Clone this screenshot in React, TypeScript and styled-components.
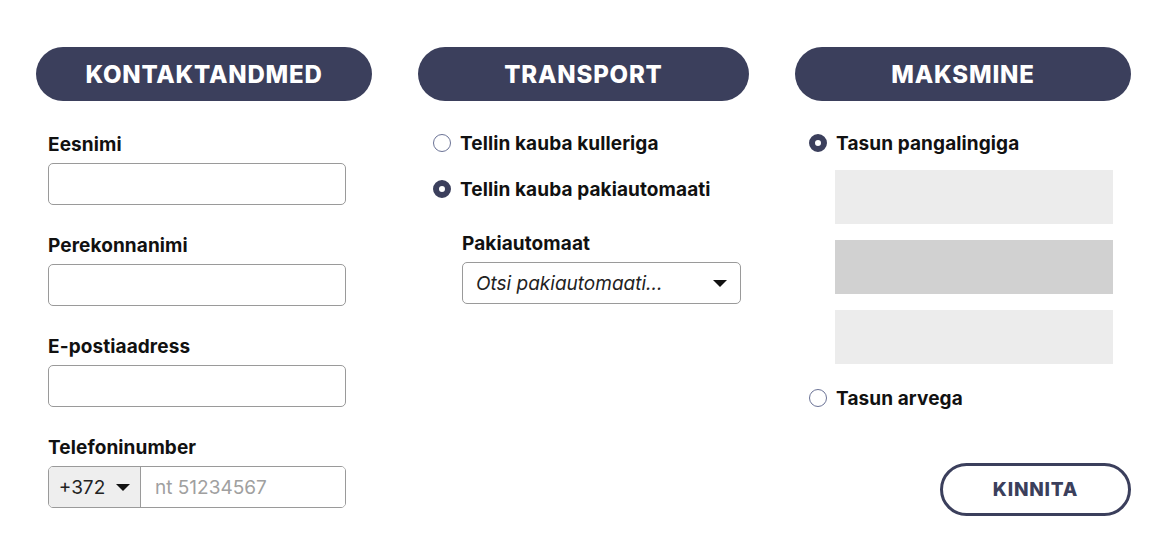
import styled, { createGlobalStyle } from "styled-components";

const GlobalStyle = createGlobalStyle`
  body {
    margin: 0;
    background: #ffffff;
    font-family: "Inter", "Liberation Sans", sans-serif;
    color: #111111;
  }
  * { box-sizing: border-box; }
`;

const NAVY = "#3b3f5c";

const Page = styled.div`
  display: grid;
  grid-template-columns: 336px 331px 336px;
  column-gap: 46px;
  padding: 47px 39px 0 36px;
  height: 555px;
`;

const Column = styled.section`
  display: flex;
  flex-direction: column;
`;

const Header = styled.h2`
  margin: 0 0 31px;
  height: 54px;
  border-radius: 27px;
  background: ${NAVY};
  color: #ffffff;
  display: flex;
  align-items: center;
  justify-content: center;
  font-size: 24px;
  font-weight: 800;
  letter-spacing: 0.8px;
  text-transform: uppercase;
`;

const Body = styled.div<{ $inset: number }>`
  display: flex;
  flex-direction: column;
  padding-left: ${(p) => p.$inset}px;
`;

const Field = styled.div`
  display: flex;
  flex-direction: column;
  margin-bottom: 28px;
`;

const Label = styled.label`
  font-size: 19px;
  line-height: 22px;
  font-weight: 700;
  letter-spacing: 0.1px;
  margin: 2px 0 7px;
`;

const TextInput = styled.input`
  width: 298px;
  height: 42px;
  border: 1.5px solid #9a9a9a;
  border-radius: 5px;
  padding: 0 14px;
  font: inherit;
  font-size: 18px;
  outline: none;
`;

const PhoneBox = styled.div`
  width: 298px;
  height: 42px;
  border: 1.5px solid #9a9a9a;
  border-radius: 5px;
  display: flex;
  overflow: hidden;
`;

const Prefix = styled.div`
  width: 92px;
  flex-shrink: 0;
  background: #eeeeee;
  border-right: 1.5px solid #9a9a9a;
  display: flex;
  align-items: center;
  justify-content: center;
  gap: 11px;
  font-size: 19px;
  color: #222222;
`;

const PhoneInput = styled.input`
  flex: 1;
  min-width: 0;
  border: 0;
  padding: 0 14px;
  font: inherit;
  font-size: 19px;
  outline: none;
  &::placeholder { color: #a0a0a0; }
`;

const Caret = styled.span`
  width: 0;
  height: 0;
  border-left: 7px solid transparent;
  border-right: 7px solid transparent;
  border-top: 7px solid #111111;
`;

const RadioRow = styled.label<{ $gap?: number }>`
  display: flex;
  align-items: center;
  gap: 9px;
  height: 22px;
  font-size: 19px;
  font-weight: 700;
  letter-spacing: 0.1px;
  margin-bottom: ${(p) => p.$gap ?? 0}px;
`;

const RadioDot = styled.span<{ $checked?: boolean }>`
  width: 18px;
  height: 18px;
  border-radius: 50%;
  flex-shrink: 0;
  border: ${(p) => (p.$checked ? `6px solid ${NAVY}` : "1.5px solid #6b7396")};
  background: #ffffff;
`;

const SubField = styled.div`
  display: flex;
  flex-direction: column;
  padding-left: 29px;
`;

const Select = styled.div`
  width: 279px;
  height: 42px;
  border: 1.5px solid #9a9a9a;
  border-radius: 5px;
  display: flex;
  align-items: center;
  justify-content: space-between;
  padding: 0 13px 0 13px;
  font-size: 19px;
  font-style: italic;
  color: #222222;
`;

const BankList = styled.div`
  display: flex;
  flex-direction: column;
  gap: 16px;
  margin: 16px 0 23px 26px;
`;

const BankTile = styled.div<{ $active?: boolean }>`
  width: 278px;
  height: 54px;
  background: ${(p) => (p.$active ? "#d1d1d1" : "#ececec")};
`;

const Actions = styled.div`
  display: flex;
  justify-content: flex-end;
  margin-top: 54px;
`;

const ConfirmButton = styled.button`
  width: 191px;
  height: 53px;
  border: 3px solid ${NAVY};
  border-radius: 27px;
  background: #ffffff;
  color: ${NAVY};
  font: inherit;
  font-size: 19px;
  font-weight: 800;
  letter-spacing: 0.8px;
  cursor: pointer;
`;

export default function App() {
  return (
    <>
      <GlobalStyle />
      <Page>
        <Column>
          <Header>Kontaktandmed</Header>
          <Body $inset={12}>
            <Field>
              <Label>Eesnimi</Label>
              <TextInput />
            </Field>
            <Field>
              <Label>Perekonnanimi</Label>
              <TextInput />
            </Field>
            <Field>
              <Label>E-postiaadress</Label>
              <TextInput />
            </Field>
            <Field>
              <Label>Telefoninumber</Label>
              <PhoneBox>
                <Prefix>
                  +372 <Caret />
                </Prefix>
                <PhoneInput placeholder="nt 51234567" />
              </PhoneBox>
            </Field>
          </Body>
        </Column>

        <Column>
          <Header>Transport</Header>
          <Body $inset={15}>
            <RadioRow $gap={24}>
              <RadioDot />
              Tellin kauba kulleriga
            </RadioRow>
            <RadioRow $gap={31}>
              <RadioDot $checked />
              Tellin kauba pakiautomaati
            </RadioRow>
            <SubField>
              <Label>Pakiautomaat</Label>
              <Select>
                Otsi pakiautomaati...
                <Caret />
              </Select>
            </SubField>
          </Body>
        </Column>

        <Column>
          <Header>Maksmine</Header>
          <Body $inset={14}>
            <RadioRow>
              <RadioDot $checked />
              Tasun pangalingiga
            </RadioRow>
            <BankList>
              <BankTile />
              <BankTile $active />
              <BankTile />
            </BankList>
            <RadioRow>
              <RadioDot />
              Tasun arvega
            </RadioRow>
          </Body>
          <Actions>
            <ConfirmButton>KINNITA</ConfirmButton>
          </Actions>
        </Column>
      </Page>
    </>
  );
}
